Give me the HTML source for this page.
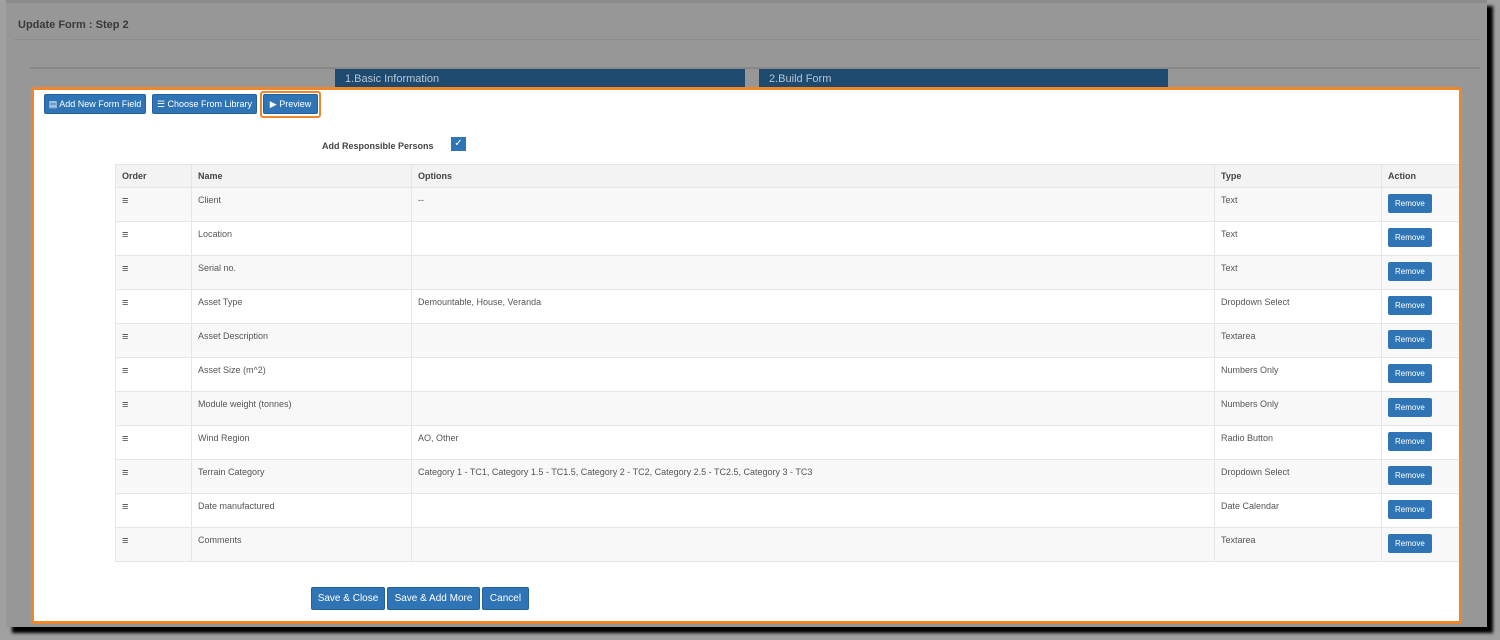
<!DOCTYPE html>
<html><head><style>
*{box-sizing:border-box;margin:0;padding:0}
body{width:1500px;height:640px;background:#a0a0a0;font-family:"Liberation Sans",sans-serif;position:relative;overflow:hidden}
.win{position:absolute;left:6px;top:0;width:1481px;height:627px;background:#979797;box-shadow:6px 6px 3px #000;border-top:3px solid #8a8a8a}
.abs{position:absolute}
.title{top:16px;font-size:11px;font-weight:bold;color:#3a3a3a}
.tab{top:66px;height:20px;background:#1e4a70;color:#b8c6d4;font-size:11px;padding:4px 10px}
.box{left:31px;top:87px;width:1431px;height:537px;background:#fff;border:3px solid #f0862a;border-radius:3px;overflow:hidden}
.btn{position:absolute;background:#2f75b5;color:#fff;font-size:9px;border-radius:2px;height:20px;line-height:19px;text-align:center;border:1px solid #25609a;white-space:nowrap}
table{position:absolute;left:81px;top:74px;width:1372px;border-collapse:collapse;font-size:9px;color:#555;table-layout:fixed}
td,th{border:1px solid #e6e6e6;text-align:left;vertical-align:top;padding:0 6px}
th{height:23px;background:#f3f3f3;font-weight:bold;color:#444;vertical-align:middle}
td{height:34px;padding-top:7px}
tr:nth-child(even) td{background:#f8f8f8}
.rm{display:inline-block;background:#2f75b5;color:#fff;font-size:8px;padding:0 7px;height:19px;line-height:19px;border-radius:2px;margin-top:-1px}
.ham{font-size:11px;color:#444}
.fb{position:absolute;top:497px;height:23px;line-height:22px;background:#2f75b5;color:#fff;font-size:10px;text-align:center;border-radius:2px;border:1px solid #25609a}
</style></head><body>
<div class="win">
<div class="abs title" style="left:12px">Update Form : Step 2</div>
<div class="abs" style="left:8px;top:36px;width:1466px;height:1px;background:#8d8d8d"></div>
<div class="abs" style="left:24px;top:64px;width:1450px;height:2px;background:#888"></div>
<div class="abs tab" style="left:329px;width:410px">1.Basic Information</div>
<div class="abs tab" style="left:753px;width:409px">2.Build Form</div>
</div>
<div class="abs box">
<div class="btn" style="left:10px;top:4px;width:102px">&#9636; Add New Form Field</div>
<div class="btn" style="left:118px;top:4px;width:105px">&#9776; Choose From Library</div>
<div class="abs" style="left:226px;top:1px;width:61px;height:27px;border:2px solid #f0862a;border-radius:3px"></div>
<div class="btn" style="left:229px;top:4px;width:55px">&#9654; Preview</div>
<div class="abs" style="left:288px;top:51px;font-size:9px;font-weight:bold;color:#444">Add Responsible Persons</div>
<div class="abs" style="left:417px;top:47px;width:15px;height:14px;background:#2f75b5;color:#fff;font-size:10px;text-align:center;line-height:14px">&#10003;</div>
<table>
<colgroup><col style="width:76px"><col style="width:220px"><col style="width:803px"><col style="width:167px"><col></colgroup>
<tr><th>Order</th><th>Name</th><th>Options</th><th>Type</th><th>Action</th></tr>
<tr><td class="ham">&#8801;</td><td>Client</td><td>--</td><td>Text</td><td><span class="rm">Remove</span></td></tr>
<tr><td class="ham">&#8801;</td><td>Location</td><td></td><td>Text</td><td><span class="rm">Remove</span></td></tr>
<tr><td class="ham">&#8801;</td><td>Serial no.</td><td></td><td>Text</td><td><span class="rm">Remove</span></td></tr>
<tr><td class="ham">&#8801;</td><td>Asset Type</td><td>Demountable, House, Veranda</td><td>Dropdown Select</td><td><span class="rm">Remove</span></td></tr>
<tr><td class="ham">&#8801;</td><td>Asset Description</td><td></td><td>Textarea</td><td><span class="rm">Remove</span></td></tr>
<tr><td class="ham">&#8801;</td><td>Asset Size (m^2)</td><td></td><td>Numbers Only</td><td><span class="rm">Remove</span></td></tr>
<tr><td class="ham">&#8801;</td><td>Module weight (tonnes)</td><td></td><td>Numbers Only</td><td><span class="rm">Remove</span></td></tr>
<tr><td class="ham">&#8801;</td><td>Wind Region</td><td>AO, Other</td><td>Radio Button</td><td><span class="rm">Remove</span></td></tr>
<tr><td class="ham">&#8801;</td><td>Terrain Category</td><td>Category 1 - TC1, Category 1.5 - TC1.5, Category 2 - TC2, Category 2.5 - TC2.5, Category 3 - TC3</td><td>Dropdown Select</td><td><span class="rm">Remove</span></td></tr>
<tr><td class="ham">&#8801;</td><td>Date manufactured</td><td></td><td>Date Calendar</td><td><span class="rm">Remove</span></td></tr>
<tr><td class="ham">&#8801;</td><td>Comments</td><td></td><td>Textarea</td><td><span class="rm">Remove</span></td></tr>
</table>
<div class="fb" style="left:277px;width:74px">Save &amp; Close</div>
<div class="fb" style="left:353px;width:93px">Save &amp; Add More</div>
<div class="fb" style="left:448px;width:47px">Cancel</div>
</div>
</body></html>
